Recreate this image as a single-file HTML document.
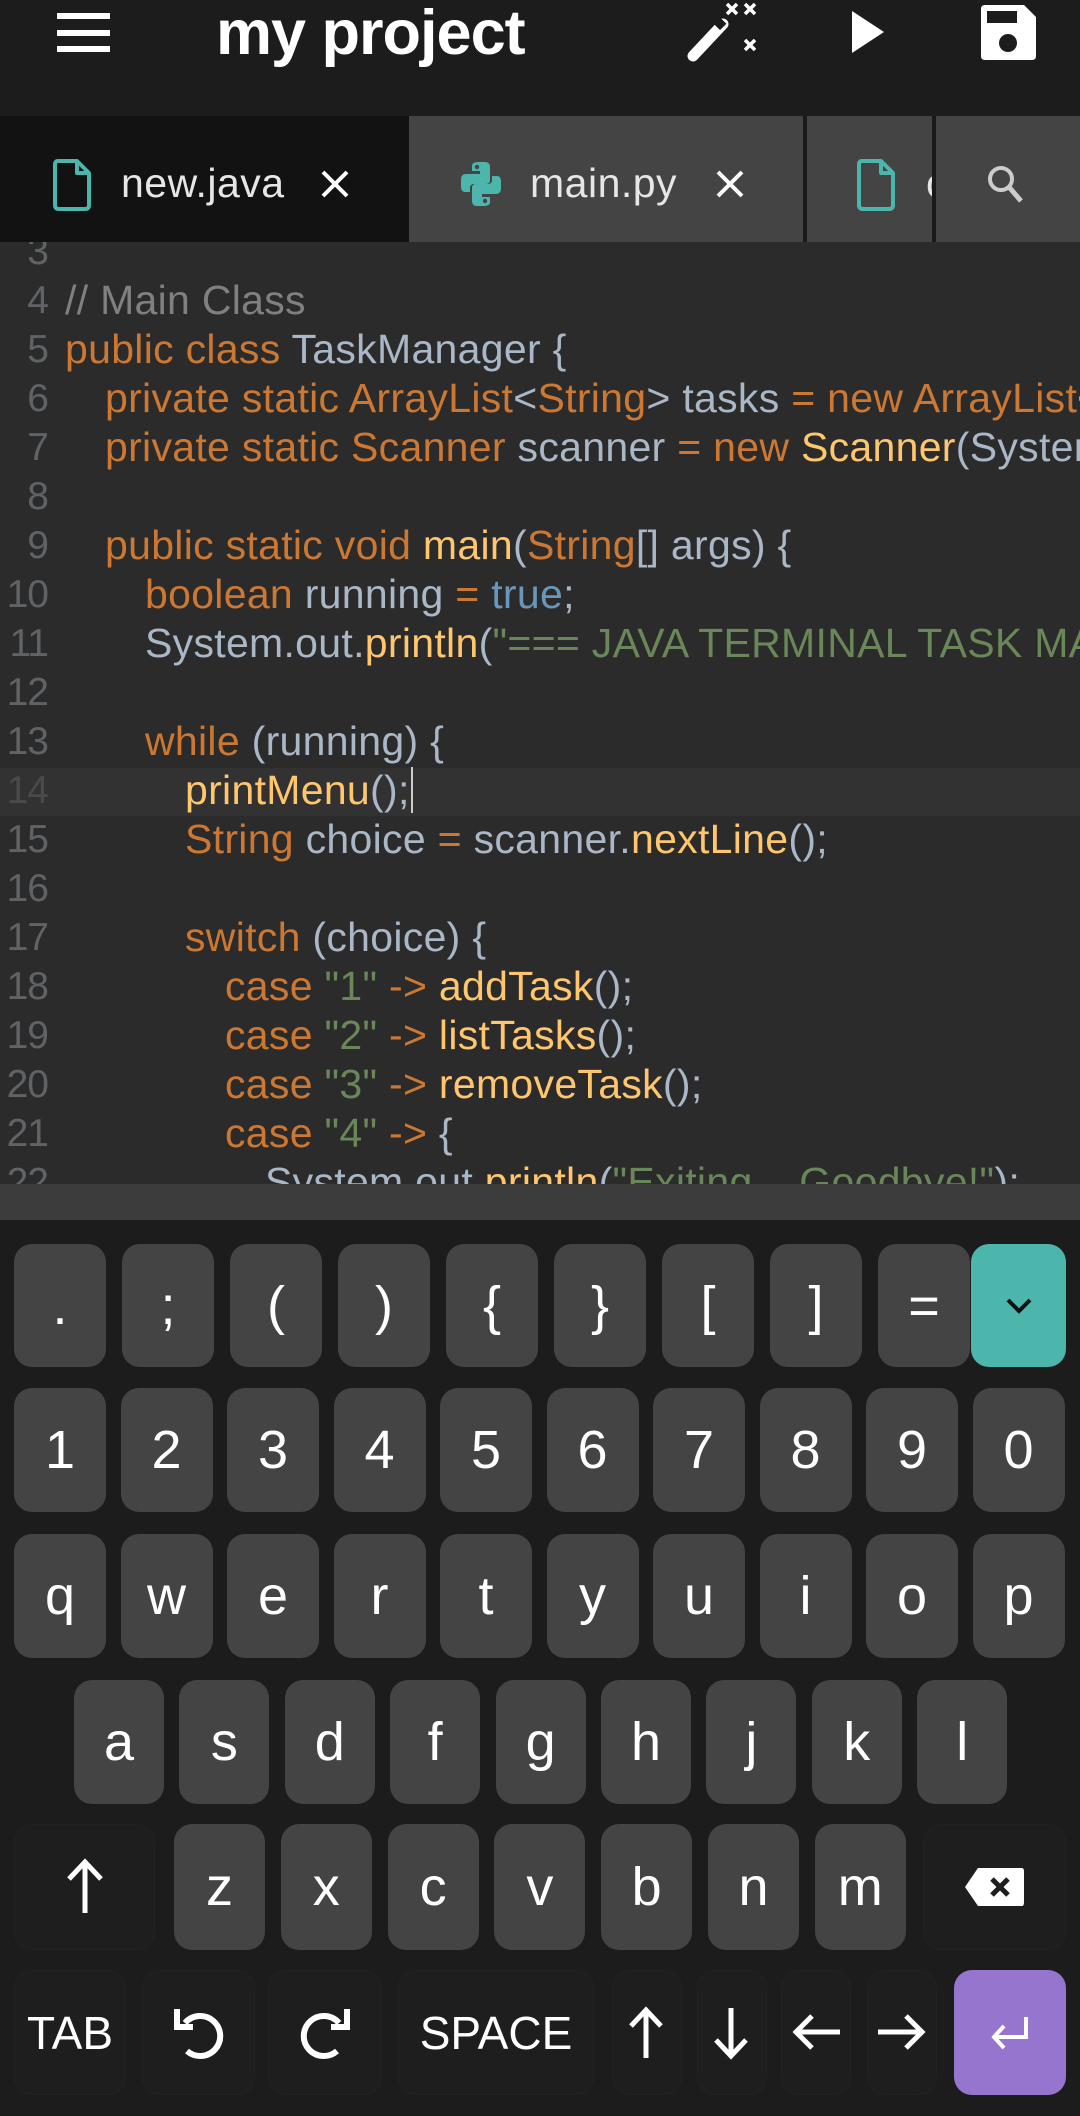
<!DOCTYPE html>
<html><head><meta charset="utf-8"><style>
*{margin:0;padding:0;box-sizing:border-box}
body{width:1080px;height:2116px;background:#1c1c1c;position:relative;overflow:hidden;font-family:"Liberation Sans",sans-serif}
.abs{position:absolute}
#top{left:0;top:0;width:1080px;height:116px;background:#1c1c1c}
#tabs{left:0;top:116px;width:1080px;height:126px;background:#444}
#editor{left:0;top:242px;width:1080px;height:942px;background:#2b2b2b;overflow:hidden}
.ln{position:absolute;left:0;width:48px;text-align:right;color:#606366;font-size:39px;line-height:49px;height:49px;letter-spacing:-1px}
.cl{position:absolute;white-space:pre;font-size:41px;line-height:49px;height:49px;color:#a9b7c6;letter-spacing:0.3px}
.k{color:#cc7832}.f{color:#ffc66d}.s{color:#6a8759}.b{color:#6897bb}.c{color:#808080}
.key{position:absolute;background:#444;border-radius:18px;color:#fff;font-size:54px;display:flex;align-items:center;justify-content:center}
.dk{background:#1e1e1e;border:1px solid #222}
</style></head><body>
<div id="top" class="abs">
  <div class="abs" style="left:57px;top:13px;width:53px;height:6px;background:#fff"></div>
  <div class="abs" style="left:57px;top:30px;width:53px;height:6px;background:#fff"></div>
  <div class="abs" style="left:57px;top:46px;width:53px;height:6px;background:#fff"></div>
  <div class="abs" style="left:216px;top:-7px;font-size:63px;font-weight:bold;color:#fff;letter-spacing:-1px;line-height:80px">my project</div>
  <svg class="abs" style="left:680px;top:0" width="80" height="70" viewBox="0 0 80 70">
    <path d="M13 56 L43 24" stroke="#fff" stroke-width="11" stroke-linecap="round"/>
    <rect x="36" y="19" width="9" height="9" fill="#1c1c1c" transform="rotate(45 40 23)"/>
    <g stroke="#fff" stroke-width="3.5"><path d="M47 4 L57 14 M57 4 L47 14"/><path d="M65 4 L75 14 M75 4 L65 14"/><path d="M65 40 L75 50 M75 40 L65 50"/></g>
  </svg>
  <svg class="abs" style="left:850px;top:10px" width="36" height="44"><path d="M2 1 L34 22 L2 43Z" fill="#fff"/></svg>
  <svg class="abs" style="left:981px;top:5px" width="55" height="55" viewBox="0 0 55 55">
    <path d="M4 0 H43 L55 12 V51 Q55 55 51 55 H4 Q0 55 0 51 V4 Q0 0 4 0Z" fill="#fff"/>
    <rect x="6" y="6" width="30" height="12" fill="#1c1c1c"/><circle cx="27" cy="38" r="9" fill="#1c1c1c"/>
  </svg>
</div>
<div id="tabs" class="abs">
  <div class="abs" style="left:0;top:0;width:409px;height:126px;background:#121212"></div>
  <svg class="abs" style="left:53px;top:43px" width="38" height="52" viewBox="0 0 38 52"><path d="M5 2 H24 L36 14 V46 Q36 50 32 50 H6 Q2 50 2 46 V6 Q2 2 5 2Z M24 2 V14 H36" fill="none" stroke="#4db6ac" stroke-width="4" stroke-linejoin="round"/></svg>
  <div class="abs" style="left:121px;top:37px;font-size:41px;color:#e6e6e6;line-height:60px;letter-spacing:0.5px">new.java</div>
  <svg class="abs" style="left:320px;top:53px" width="30" height="30"><path d="M3 3 L27 27 M27 3 L3 27" stroke="#fff" stroke-width="4"/></svg>
  <svg class="abs" style="left:459px;top:44px" width="44" height="48" viewBox="0 0 44 48">
    <path d="M20 2 H26 Q31 2 31 7 V20 Q31 24 27 24 H15 Q11 24 11 28 V32 H6 Q2 32 2 26 V20 Q2 14 7 14 H21 V11 H13 V6 Q13 2 20 2Z" fill="#4db6ac"/>
    <path d="M24 46 H18 Q13 46 13 41 V28 Q13 24 17 24 H29 Q33 24 33 20 V16 H38 Q42 16 42 22 V28 Q42 34 37 34 H23 V37 H31 V42 Q31 46 24 46Z" fill="#4db6ac"/>
    <circle cx="18" cy="7" r="2.2" fill="#444"/><circle cx="26" cy="41" r="2.2" fill="#444"/>
  </svg>
  <div class="abs" style="left:530px;top:37px;font-size:41px;color:#e6e6e6;line-height:60px;letter-spacing:0.5px">main.py</div>
  <svg class="abs" style="left:715px;top:53px" width="30" height="30"><path d="M3 3 L27 27 M27 3 L3 27" stroke="#fff" stroke-width="4"/></svg>
  <div class="abs" style="left:803px;top:0;width:4px;height:126px;background:#1a1a1a"></div>
  <svg class="abs" style="left:857px;top:43px" width="38" height="52" viewBox="0 0 38 52"><path d="M5 2 H24 L36 14 V46 Q36 50 32 50 H6 Q2 50 2 46 V6 Q2 2 5 2Z M24 2 V14 H36" fill="none" stroke="#4db6ac" stroke-width="4" stroke-linejoin="round"/></svg>
  <div class="abs" style="left:926px;top:37px;width:6px;height:60px;overflow:hidden;font-size:41px;color:#e6e6e6;line-height:60px">c</div>
  <div class="abs" style="left:932px;top:0;width:4px;height:126px;background:#1a1a1a"></div>
  <svg class="abs" style="left:986px;top:48px" width="40" height="42"><circle cx="15" cy="15" r="11" fill="none" stroke="#ccc" stroke-width="4"/><path d="M23 23 L35 37" stroke="#ccc" stroke-width="5"/></svg>
</div>
<div id="editor" class="abs">
  <div class="abs" style="left:0;top:526px;width:1080px;height:48px;background:#323232"></div>
</div>
<div class="abs" style="left:0;top:1184px;width:1080px;height:36px;background:#3c3c3c"></div>
<div id="kb"></div>
<script>
var L={3:[0,''],4:[0,'<span class="c">// Main Class</span>'],5:[0,'<span class="k">public class </span>TaskManager {'],
6:[1,'<span class="k">private static ArrayList</span>&lt;<span class="k">String</span>&gt; tasks <span class="k">= new ArrayList</span>&lt;&gt;();'],
7:[1,'<span class="k">private static Scanner </span>scanner <span class="k">= new </span><span class="f">Scanner</span>(System.in);'],8:[0,''],
9:[1,'<span class="k">public static void </span><span class="f">main</span>(<span class="k">String</span>[] args) {'],
10:[2,'<span class="k">boolean </span>running <span class="k">= </span><span class="b">true</span>;'],
11:[2,'System.out.<span class="f">println</span>(<span class="s">"=== JAVA TERMINAL TASK MANAGER ==="</span>);'],12:[0,''],
13:[2,'<span class="k">while </span>(running) {'],14:[3,'<span class="f">printMenu</span>();<span style="border-left:2px solid #ccc;margin-left:1px"></span>'],
15:[3,'<span class="k">String </span>choice <span class="k">= </span>scanner.<span class="f">nextLine</span>();'],16:[0,''],
17:[3,'<span class="k">switch </span>(choice) {'],18:[4,'<span class="k">case </span><span class="s">"1"</span><span class="k"> -&gt; </span><span class="f">addTask</span>();'],
19:[4,'<span class="k">case </span><span class="s">"2"</span><span class="k"> -&gt; </span><span class="f">listTasks</span>();'],
20:[4,'<span class="k">case </span><span class="s">"3"</span><span class="k"> -&gt; </span><span class="f">removeTask</span>();'],
21:[4,'<span class="k">case </span><span class="s">"4"</span><span class="k"> -&gt; </span>{'],
22:[5,'System.out.<span class="f">println</span>(<span class="s">"Exiting... Goodbye!"</span>);']};
var h='';
for(var n=3;n<=22;n++){var t=276+(n-4)*49-242;
h+='<div class="ln" style="top:'+t+'px;'+(n==14?'color:#4a4a4a':'')+'">'+n+'</div>';
h+='<div class="cl" style="top:'+t+'px;left:'+(65+L[n][0]*40)+'px">'+L[n][1]+'</div>';}
document.getElementById('editor').innerHTML+=h;
var k='';
function K(x,y,w,hh,txt,cls,st){k+='<div class="key '+(cls||'')+'" style="left:'+x+'px;top:'+y+'px;width:'+w+'px;height:'+hh+'px;'+(st||'')+'">'+txt+'</div>';}
var r1=['.',';','(',')','{','}','[',']','='];
for(var i=0;i<9;i++)K(14+i*108,1244,92,123,r1[i]);
K(971,1244,95,123,'<svg width="30" height="20"><path d="M4 4 L15 15 L26 4" stroke="#111" stroke-width="4" fill="none"/></svg>','','background:#4db6ac');
var r2='1234567890',r3='qwertyuiop',r4='asdfghjkl',r5='zxcvbnm';
for(i=0;i<10;i++){K(14+i*106.5,1388,92,124,r2[i]);K(14+i*106.5,1534,92,124,r3[i]);}
for(i=0;i<9;i++)K(74+i*105.4,1680,90,124,r4[i]);
for(i=0;i<7;i++)K(174+i*106.8,1824,91,126,r5[i]);
K(14,1824,141,126,'<svg width="40" height="60"><path d="M20 56 V6 M4 22 L20 5 L36 22" stroke="#fff" stroke-width="5" fill="none"/></svg>','dk');
K(923,1824,143,126,'<svg width="62" height="42" viewBox="0 0 62 42"><path d="M14 2 H58 Q60 2 60 6 V36 Q60 40 58 40 H14 L1 21Z" fill="#fff"/><path d="M28 13 L44 29 M44 13 L28 29" stroke="#1e1e1e" stroke-width="5"/></svg>','dk');
K(14,1970,112,125,'TAB','dk','font-size:46px');
K(142,1970,113,125,'<svg width="56" height="60" viewBox="0 0 56 60"><path d="M14 20 A20 20 0 1 1 16 48" stroke="#fff" stroke-width="6" fill="none"/><path d="M6 6 V24 H22" stroke="#fff" stroke-width="6" fill="none"/></svg>','dk');
K(268,1970,114,125,'<svg width="56" height="60" viewBox="0 0 56 60"><path d="M42 20 A20 20 0 1 0 40 48" stroke="#fff" stroke-width="6" fill="none"/><path d="M50 6 V24 H34" stroke="#fff" stroke-width="6" fill="none"/></svg>','dk');
K(398,1970,196,125,'SPACE','dk','font-size:46px');
var ar=['<path d="M25 54 V6 M10 22 L25 6 L40 22"','<path d="M25 4 V52 M10 36 L25 52 L40 36"','<path d="M50 28 H6 M22 12 L6 28 L22 44"','<path d="M2 28 H46 M30 12 L46 28 L30 44"'];
var ax=[612,697,781,867];
for(i=0;i<4;i++)K(ax[i],1970,70,125,'<svg width="52" height="58">'+ar[i]+' stroke="#fff" stroke-width="5" fill="none"/></svg>','dk');
K(954,1970,112,125,'<svg width="44" height="40"><path d="M38 4 V24 H6 M16 13 L6 24 L16 35" stroke="#fff" stroke-width="4" fill="none"/></svg>','','background:#9575cd');
document.getElementById('kb').innerHTML=k;
</script>
</body></html>
